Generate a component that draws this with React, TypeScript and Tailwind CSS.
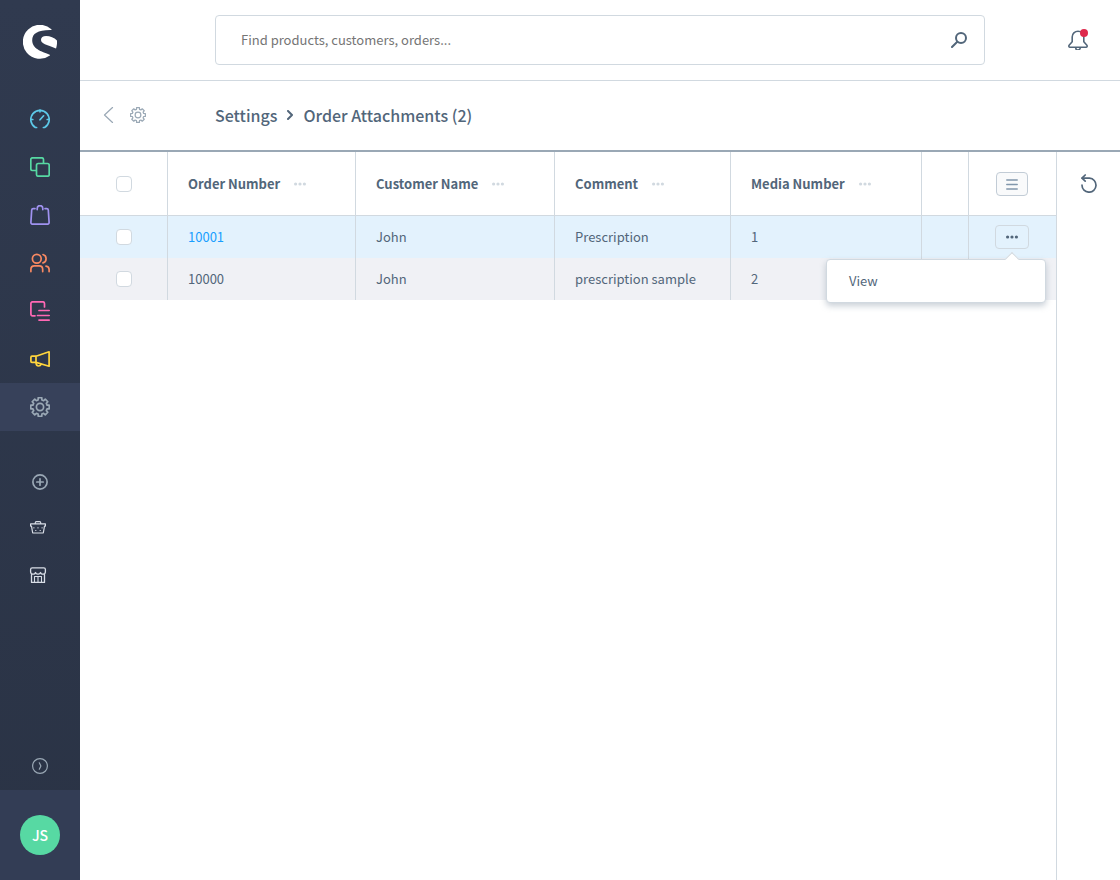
import type { ReactNode } from "react";

type IconProps = { className?: string };

const gearPath = (outer: number, inner: number) => {
  const points: string[] = [];
  for (let i = 0; i < 8; i++) {
    [
      [-15, inner],
      [-11, outer],
      [11, outer],
      [15, inner],
    ].forEach(([offset, radius]) => {
      const angle = ((i * 45 + offset) * Math.PI) / 180;
      points.push(
        `${(10 + radius * Math.sin(angle)).toFixed(2)} ${(10 - radius * Math.cos(angle)).toFixed(2)}`
      );
    });
  }
  return `M${points.join("L")}Z`;
};

const Svg = ({
  size = 20,
  box = 20,
  width = 1.7,
  className = "",
  children,
}: {
  size?: number;
  box?: number;
  width?: number;
  className?: string;
  children: ReactNode;
}) => (
  <svg
    width={size}
    height={size}
    viewBox={`0 0 ${box} ${box}`}
    fill="none"
    stroke="currentColor"
    strokeWidth={width}
    strokeLinecap="round"
    strokeLinejoin="round"
    className={`shrink-0 ${className}`}
    aria-hidden="true"
  >
    {children}
  </svg>
);

const Logo = () => (
  <svg width="34" height="34" viewBox="0 0 34 34" fill="currentColor" aria-hidden="true">
    <path d="M28.4 4.3A17 17 0 1 0 26.900 30.500c.3-.3.2-.6-.2-.8C21.500 27 9.200 25 9.200 15.200 9.200 8.500 15 4.800 28 5c.6 0 .7-.4.4-.7z" />
    <path d="M33.700 15.300C31.500 12.600 27 10.900 23.200 10.900c-3.400 0-5.200 1.600-5.200 3.900 0 3.500 4.500 4.800 8 6 2.200.8 4.300 1.500 6.300 2.500.5.2.8.1.900-.4.700-2.300 1-4.900.8-6.900 0-.3-.1-.5-.3-.7z" />
  </svg>
);

const DashboardIcon = () => (
  <Svg>
    <path d="M6.600 18.500H5.400A9.200 9.200 0 1 1 14.600 18.500H13.400" />
    <path d="M10 1v1.800M1 10.500h1.800M17.200 10.500H19M10 10.800l3.600-4" />
  </Svg>
);

const CatalogueIcon = () => (
  <Svg>
    <path d="M6 13.500H2.500a1.700 1.700 0 0 1-1.700-1.700V2.500A1.700 1.700 0 0 1 2.500.8h9.300a1.700 1.700 0 0 1 1.700 1.700V6" />
    <rect x="6.500" y="6.500" width="12.700" height="12.700" rx="1.700" />
  </Svg>
);

const OrdersIcon = () => (
  <Svg>
    <path d="M5 3.600H3.200c-.8 0-1.400.5-1.500 1.400L.9 17.400c-.1 1.100.7 1.800 1.700 1.800h14.800c1 0 1.800-.7 1.700-1.800L18.300 5c-.1-.9-.7-1.400-1.500-1.400H15" />
    <path d="M7.200 4.600V3.400a2.800 2.800 0 0 1 5.600 0v1.200" />
  </Svg>
);

const CustomersIcon = () => (
  <Svg>
    <circle cx="6.800" cy="5.700" r="4.400" />
    <path d="M.9 18.600v-2.200c0-2.100 1.400-3.500 3.500-3.500h4.800c2.100 0 3.500 1.400 3.500 3.500v2.200" />
    <path d="M13 1.500a4.400 4.400 0 0 1 0 8.400M16 13.100c2 .3 3.100 1.600 3.100 3.500v2" />
  </Svg>
);

const ContentIcon = () => (
  <Svg>
    <path d="M5 14.800H2.600A1.700 1.700 0 0 1 .9 13.100V2.500A1.700 1.700 0 0 1 2.600.8h10.200a1.700 1.700 0 0 1 1.700 1.700V6" />
    <path d="M9 9.500h10.200M7.500 14.500h11.700M9 19.100h10.200" />
  </Svg>
);

const MarketingIcon = () => (
  <Svg>
    <path d="M6 7.200 19.100 2.800v14.400L6 13.400M6 7.200H2A1.200 1.200 0 0 0 .9 8.400v3.800A1.200 1.200 0 0 0 2 13.400h4zM6 7.200v6.200" />
    <path d="M6 13.600c0 2.200 1 3.400 2.700 3.400 1.100 0 1.900-.5 2.400-1.600" />
  </Svg>
);

const GearIcon = ({ size, width, className }: IconProps & { size: number; width: number }) => (
  <Svg size={size} width={width} className={className}>
    <path d={gearPath(9.4, 7.3)} />
    <circle cx="10" cy="10" r="3.600" />
  </Svg>
);

const PlusIcon = () => (
  <Svg size={16} box={16} width={1.700}>
    <circle cx="8" cy="8" r="7.100" />
    <path d="M8 4.800v6.400M4.800 8h6.400" />
  </Svg>
);

const BasketIcon = () => (
  <Svg size={22} box={22} width={1.200}>
    <path d="M1.600 4.900h14.800v2.200h-.9l-1.200 6.900H3.700L2.500 7.100h-.9zM6.200 4.700v-.5c0-1 .5-1.500 1.200-1.500h3.200c.7 0 1.200.5 1.200 1.500v.5" />
    <path d="M4.800 8.800h.2M8.900 8.800h.2M13 8.800h.2M6.700 11.500h.2M11.100 11.500h.2" />
  </Svg>
);

const ShopIcon = () => (
  <Svg size={22} box={22} width={1.300}>
    <path d="M2.500 7.200v8.200h13V7.200M3.200.8h11.600c.9 0 1.600.8 1.600 1.800V5a2.400 2.400 0 0 1-2.400 2.200A2.400 2.400 0 0 1 11.500 5.500 2.500 2.500 0 0 1 9 7.200 2.500 2.500 0 0 1 6.500 5.500 2.400 2.400 0 0 1 4 7.200 2.400 2.400 0 0 1 1.600 5V2.600C1.600 1.600 2.300.8 3.200.8z" />
    <path d="M5.500 15.200V9.500h7v5.700M9 9.500v5.700" strokeWidth="1.100" />
  </Svg>
);

const DotsIcon = ({ className = "" }: IconProps) => (
  <svg width="12" height="4" viewBox="0 0 12 4" fill="currentColor" className={className} aria-hidden="true">
    <circle cx="1.600" cy="2" r="1.600" />
    <circle cx="6" cy="2" r="1.600" />
    <circle cx="10.400" cy="2" r="1.600" />
  </svg>
);

const mainNav = [
  { label: "Dashboard", color: "text-[#5dc9e8]", icon: <DashboardIcon /> },
  { label: "Catalogues", color: "text-[#57d9a3]", icon: <CatalogueIcon /> },
  { label: "Orders", color: "text-[#a092f0]", icon: <OrdersIcon /> },
  { label: "Customers", color: "text-[#f88962]", icon: <CustomersIcon /> },
  { label: "Content", color: "text-[#ff68b4]", icon: <ContentIcon /> },
  { label: "Marketing", color: "text-[#ffd53d]", icon: <MarketingIcon /> },
  { label: "Settings", color: "text-[#9aa8b5]", icon: <GearIcon size={20} width={1.7} />, active: true },
];

const extraNav = [
  { label: "Extensions", color: "text-[#9aa8b5]", icon: <PlusIcon /> },
  { label: "Storefront", color: "text-[#d8dde6]", icon: <BasketIcon /> },
  { label: "Shop", color: "text-[#d8dde6]", icon: <ShopIcon /> },
];

const columns = [
  { label: "Order Number", width: "w-[188px]" },
  { label: "Customer Name", width: "w-[199px]" },
  { label: "Comment", width: "w-[176px]" },
  { label: "Media Number", width: "w-[191px]" },
];

const orders = [
  { number: "10001", customer: "John", comment: "Prescription", media: "1", hovered: true },
  { number: "10000", customer: "John", comment: "prescription sample", media: "2", hovered: false },
];

const NavItem = ({ item }: { item: { label: string; color: string; icon: ReactNode; active?: boolean } }) => (
  <li>
    <a
      href="#"
      aria-label={item.label}
      className={`flex h-12 items-center justify-center ${item.color} ${item.active ? "bg-[#37415a]" : ""}`}
    >
      {item.icon}
    </a>
  </li>
);

const Sidebar = () => (
  <aside className="flex w-20 shrink-0 flex-col bg-linear-to-b from-[#303a4f] to-[#2a3345]">
    <a href="#" aria-label="Home" className="mb-9 flex justify-center pt-[25px] text-white">
      <Logo />
    </a>
    <nav>
      <ul>
        {mainNav.map((item) => (
          <NavItem key={item.label} item={item} />
        ))}
      </ul>
      <ul className="mt-[27px]">
        {extraNav.map((item) => (
          <NavItem key={item.label} item={item} />
        ))}
      </ul>
    </nav>
    <button type="button" aria-label="Expand menu" className="mt-auto flex h-12 items-center justify-center text-[#9aa8b5]">
      <Svg size={16} box={16} width={1.2}>
        <circle cx="8" cy="8" r="7.4" />
        <path d="M7.3 4.8 8.9 8l-1.600 3.200" />
      </Svg>
    </button>
    <div className="flex h-[90px] items-center justify-center bg-[#333d55]">
      <button type="button" className="size-10 rounded-full bg-[#57d9a3] text-sm font-medium text-white">
        JS
      </button>
    </div>
  </aside>
);

const TopBar = () => (
  <header className="grid grid-cols-[135px_1fr_135px] items-center border-b border-[#d1d9e0] py-[15px]">
    <label className="col-start-2 flex h-[50px] items-center rounded border border-[#d1d9e0] pr-[17px] pl-[25px]">
      <input
        type="text"
        aria-label="Search"
        placeholder="Find products, customers, orders..."
        className="min-w-0 flex-1 text-[13px] text-[#52667a] outline-none placeholder:text-[#757575]"
      />
      <Svg size={16} box={16} width={2} className="text-[#52667a]">
        <circle cx="10" cy="6" r="5" />
        <path d="M6.3 9.7 1 15" />
      </Svg>
    </label>
    <button type="button" aria-label="Notifications" className="relative mr-8 justify-self-end text-[#52667a]">
      <Svg width={1.6}>
        <path d="M10 1.200a5.800 5.800 0 0 0-5.800 5.800v4.800L1.300 15c-.9 1-.4 2.200.7 2.200h16c1.100 0 1.600-1.200.7-2.200l-2.900-3.200V7A5.800 5.800 0 0 0 10 1.200z" />
        <path d="M7.800 18a2.200 2 0 0 0 4.400 0" />
      </Svg>
      <span className="absolute -top-px right-0 size-2 rounded-full bg-[#de294c]" />
    </button>
  </header>
);

const PageHead = () => (
  <div className="flex h-[71px] items-center border-b-2 border-[#9aa8b5] pb-0.5">
    <div className="flex w-[135px] shrink-0 items-center pl-5 text-[#9aa8b5]">
      <a href="#" aria-label="Back">
        <Svg size={16} box={16} width={1.2}>
          <path d="M12.500.5 4.500 8l8 7.500" />
        </Svg>
      </a>
      <GearIcon size={16} width={1.5} className="ml-3.5" />
    </div>
    <h1 className="flex items-center text-base font-medium text-[#52667a]">
      <a href="#">Settings</a>
      <Svg size={10} box={10} width={2} className="mx-2">
        <path d="M3 1l4 4-4 4" />
      </Svg>
      <span>Order Attachments (2)</span>
    </h1>
  </div>
);

const Checkbox = ({ label }: { label: string }) => (
  <input
    type="checkbox"
    aria-label={label}
    className="mx-auto block size-4 appearance-none rounded border border-[#d1d9e0] bg-white checked:bg-[#189eff]"
  />
);

const ContextMenu = () => (
  <div className="absolute top-[43px] right-2.5 z-10 w-[220px] rounded border border-[#d1d9e0] bg-white shadow-[0_3px_6px_0_rgba(120,138,155,0.4)]">
    <span className="absolute -top-[6px] right-7 size-2.5 rotate-45 border-t border-l border-[#d1d9e0] bg-white" />
    <button type="button" className="relative block h-[42px] w-full px-[22px] text-left">
      View
    </button>
  </div>
);

const OrdersTable = () => (
  <table className="w-full table-fixed border-separate border-spacing-0 text-[13px] leading-5 text-[#52667a]">
    <thead>
      <tr className="h-16 *:border-b *:border-[#d1d9e0] *:not-last:border-r">
        <th className="w-[88px]">
          <Checkbox label="Select all" />
        </th>
        {columns.map((column) => (
          <th key={column.label} className={`px-5 text-left font-bold ${column.width}`}>
            <div className="flex items-center gap-3.5 whitespace-nowrap">
              {column.label}
              <button type="button" aria-label={`${column.label} options`} className="text-[#d1d9e0]">
                <DotsIcon />
              </button>
            </div>
          </th>
        ))}
        <th />
        <th className="w-[87px] pr-px">
          <button
            type="button"
            aria-label="List settings"
            className="mx-auto flex h-6 w-8 items-center justify-center rounded border border-[#c2ccd6] bg-[#f9fafb] text-[#8197ac]"
          >
            <Svg size={12} box={12} width={1.5}>
              <path d="M.8 2h10.400M.8 6.500h10.400M.8 11h10.400" />
            </Svg>
          </button>
        </th>
      </tr>
    </thead>
    <tbody>
      {orders.map((order) => (
        <tr
          key={order.number}
          className={`h-[42px] *:border-[#d1d9e0] *:not-last:border-r ${order.hovered ? "bg-[#e3f2fd]" : "bg-[#f0f1f5]"}`}
        >
          <td>
            <Checkbox label={`Select order ${order.number}`} />
          </td>
          <td className="px-5">
            <a href="#" className={order.hovered ? "text-[#189eff]" : ""}>
              {order.number}
            </a>
          </td>
          <td className="px-5">{order.customer}</td>
          <td className="px-5">{order.comment}</td>
          <td className="px-5">{order.media}</td>
          <td />
          <td className="relative pr-px">
            <button
              type="button"
              aria-label={`Actions for order ${order.number}`}
              className="mx-auto flex h-6 w-[34px] items-center justify-center rounded border border-[#d1d9e0]"
            >
              <DotsIcon />
            </button>
            {order.hovered && <ContextMenu />}
          </td>
        </tr>
      ))}
    </tbody>
  </table>
);

const App = () => {
  return (
    <div className="flex min-h-screen bg-white font-['Noto_Sans_CJK_SC','Open_Sans',sans-serif]">
      <Sidebar />
      <div className="flex min-w-0 flex-1 flex-col">
        <TopBar />
        <PageHead />
        <main className="flex flex-1 items-stretch">
          <div className="min-w-0 flex-1">
            <OrdersTable />
          </div>
          <div className="w-16 shrink-0 border-l border-[#d1d9e0] pt-[21px]">
            <button type="button" aria-label="Refresh" className="mx-auto block text-[#52667a]">
              <Svg width={1.7}>
                <path d="M3.200 5.200H10.500a7 7 0 1 1-7.500 7" />
                <path d="M6.200 2 3 5.200l3.200 3" />
              </Svg>
            </button>
          </div>
        </main>
      </div>
    </div>
  );
};

export default App;
